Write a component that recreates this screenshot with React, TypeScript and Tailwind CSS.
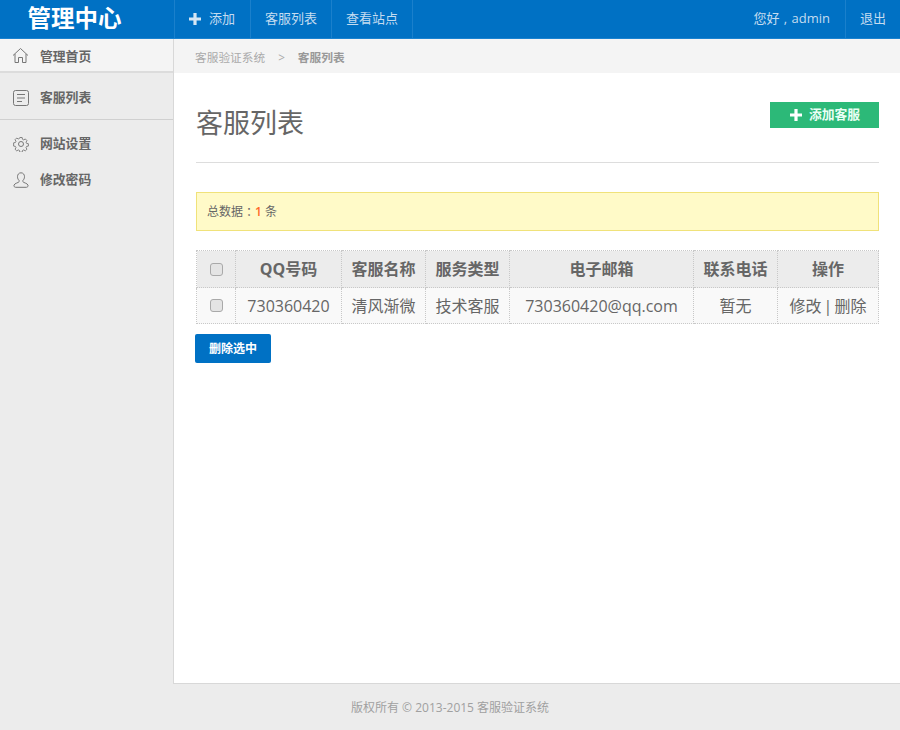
import React from "react";

const font = { fontFamily: '"Open Sans", "Noto Sans CJK SC", sans-serif' };

function Home() {
  return (
    <svg width="17" height="17" viewBox="0 0 17 17" fill="none" stroke="#777" strokeWidth="1">
      <path d="M1 8.500 8.500 1.500 16 8.500M3 7v8.500h3.500v-5h4v5H14V7" />
    </svg>
  );
}
function ListIcon() {
  return (
    <svg width="16" height="16" viewBox="0 0 16 16" fill="none" stroke="#777" strokeWidth="1">
      <rect x="0.5" y="0.5" width="15" height="15" rx="2" />
      <path d="M4 4.500h8M4 8h8M4 11.500h5" />
    </svg>
  );
}
function Gear() {
  return (
    <svg width="16" height="16" viewBox="0 0 16 16" fill="none" stroke="#777" strokeWidth="1">
      <circle cx="8" cy="8" r="2.500" />
      <path d="M6.700.8h2.600l.4 2 1.300.6 1.800-1 1.800 1.800-1 1.800.6 1.300 2 .4v2.600l-2 .4-.6 1.300 1 1.800-1.800 1.800-1.800-1-1.300.6-.4 2H6.700l-.4-2-1.300-.6-1.800 1-1.800-1.800 1-1.800-.6-1.300-2-.4V6.700l2-.4.6-1.300-1-1.800 1.800-1.800 1.800 1 1.300-.6z" transform="translate(.8 .8) scale(.9)" />
    </svg>
  );
}
function User() {
  return (
    <svg width="16" height="16" viewBox="0 0 16 16" fill="none" stroke="#777" strokeWidth="1">
      <path d="M8 .8c2.200 0 3.500 1.700 3.500 3.900 0 1.600-.7 3-1.600 3.800v1.200c0 .9 4.600 1.500 5.100 3.400.3 1.300-.5 2.200-1.600 2.200H2.600C1.500 15.300.7 14.400 1 13.100c.5-1.900 5.100-2.500 5.100-3.400V8.500C5.200 7.700 4.500 6.300 4.500 4.700 4.500 2.500 5.800.8 8 .8z" />
    </svg>
  );
}
function Plus({ className }: { className: string }) {
  return (
    <svg width="12" height="12" viewBox="0 0 12 12" className={className}>
      <path d="M4.400 0h3.200v4.400H12v3.200H7.600V12H4.400V7.600H0V4.400h4.400z" fill="currentColor" />
    </svg>
  );
}

function Check() {
  return (
    <input
      type="checkbox"
      className="mx-auto block h-[13px] w-[13px] appearance-none rounded-[3px] border border-[#a9a9a9] bg-[#e4e4e4]"
    />
  );
}

const headers = ["QQ号码", "客服名称", "服务类型", "电子邮箱", "联系电话", "操作"];
const cells = ["730360420", "清风渐微", "技术客服", "730360420@qq.com", "暂无"];
const widths = ["w-[39px]", "w-[106px]", "w-[84px]", "w-[84px]", "w-[184px]", "w-[84px]", "w-[101px]"];
const cell = "border border-dotted border-[#c8c8c8]";
const tc = "font-['Noto_Sans_CJK_TC']";

export default function App() {
  return (
    <div style={font} className="flex h-[730px] w-[900px] flex-col overflow-hidden bg-[#ececec]">
      <header className="flex h-[39px] shrink-0 border-b border-[#1a82d0] bg-[#0071c4] text-[13px] text-[#c4dcf0]">
        <div className="flex w-[175px] items-center justify-center border-r border-[#1a80cc]">
          <span className="pr-[25px] text-[23.500px] leading-none font-bold text-white">管理中心</span>
        </div>
        <div className="flex items-center gap-2 border-r border-[#1a80cc] pr-[15px] pl-[14px]">
          <Plus className="text-[#d5e6f4]" />
          <span>添加</span>
        </div>
        <div className="flex items-center border-r border-[#1a80cc] px-[14px]">客服列表</div>
        <div className="flex items-center border-r border-[#1a80cc] px-[14px]">查看站点</div>
        <div className="flex-1" />
        <div className="flex items-center border-r border-[#1a80cc] pr-[15px]">
          您好<span className="inline-block w-[12px] text-center">,</span>admin
        </div>
        <div className="flex w-[54px] items-center justify-center">退出</div>
      </header>

      <div className="flex min-h-0 flex-1">
        <aside className="w-[173px] shrink-0 text-[12.800px] font-bold text-[#666]">
          <div className="flex h-[34px] items-center gap-[11px] border-b-2 border-[#dcdcdc] bg-[#f4f4f4] pt-1 pl-3">
            <span className="flex w-[17px] -translate-y-[2px]"><Home /></span>
            <span>管理首页</span>
          </div>
          <div className="flex h-[47px] items-center gap-[11px] border-b border-[#d0d0d0] pt-1 pl-[13px]">
            <span className="flex w-4"><ListIcon /></span>
            <span>客服列表</span>
          </div>
          <div className="flex h-[47px] items-center gap-[11px] pl-[13px]">
            <span className="flex w-4"><Gear /></span>
            <span>网站设置</span>
          </div>
          <div className="flex h-[26px] items-center gap-[11px] pl-[13px]">
            <span className="flex w-4"><User /></span>
            <span>修改密码</span>
          </div>
        </aside>

        <main className="flex min-w-0 flex-1 flex-col border-b border-l border-[#d8d8d8] bg-white">
          <div className="flex h-[34px] shrink-0 items-center bg-[#f4f4f4] pt-1 pl-[21px] text-[11.700px] text-[#aaa]">
            <span>客服验证系统</span>
            <span className="mx-[13px]">&gt;</span>
            <span className="font-bold text-[#999]">客服列表</span>
          </div>

          <div className="flex flex-1 flex-col pr-[21px] pl-[22px]">
            <div className="flex h-[90px] shrink-0 items-start justify-between border-b border-[#ddd]">
              <h1 className="pt-[30px] text-[27px] leading-[40px] font-normal text-[#666]">客服列表</h1>
              <button className="mt-[29px] flex h-[26px] w-[109px] items-center justify-center gap-[7px] bg-[#2cb978] pl-px text-[12.800px] font-bold text-[#eafff5]">
                <Plus className="text-white" />
                <span>添加客服</span>
              </button>
            </div>

            <div className="mt-[29px] flex h-[39px] shrink-0 items-center border border-[#f0e27a] bg-[#fffac8] pt-px pl-[10px] text-xs text-[#666]">
              总数据<span className={tc}>：</span><span className="font-semibold text-[#ff6a2a]">1</span>&nbsp;条
            </div>

            <table className="mt-[19px] w-[682px] table-fixed border-collapse text-base text-[#666]">
              <colgroup>
                {widths.map((w, i) => <col key={i} className={w} />)}
              </colgroup>
              <thead>
                <tr className="h-[37px] bg-[#ececec]">
                  <th className={cell}><Check /></th>
                  {headers.map((h) => (
                    <th key={h} className={`${cell} font-bold`}>{h}</th>
                  ))}
                </tr>
              </thead>
              <tbody>
                <tr className="h-[36px] bg-[#f9f9f9]">
                  <td className={cell}><Check /></td>
                  {cells.map((c) => (
                    <td key={c} className={`${cell} text-center`}>{c}</td>
                  ))}
                  <td className={`${cell} text-center [word-spacing:-2px]`}>修改 | 删除</td>
                </tr>
              </tbody>
            </table>

            <button className="mt-[10px] -ml-px h-[29px] w-[76px] rounded-[2px] bg-[#0071c4] text-xs font-bold text-white">
              删除选中
            </button>
          </div>
        </main>
      </div>

      <footer className="flex h-[46px] shrink-0 items-center pt-px pl-[351px] text-xs text-[#a0a0a0]">
        版权所有 © 2013-2015 客服验证系统
      </footer>
    </div>
  );
}
